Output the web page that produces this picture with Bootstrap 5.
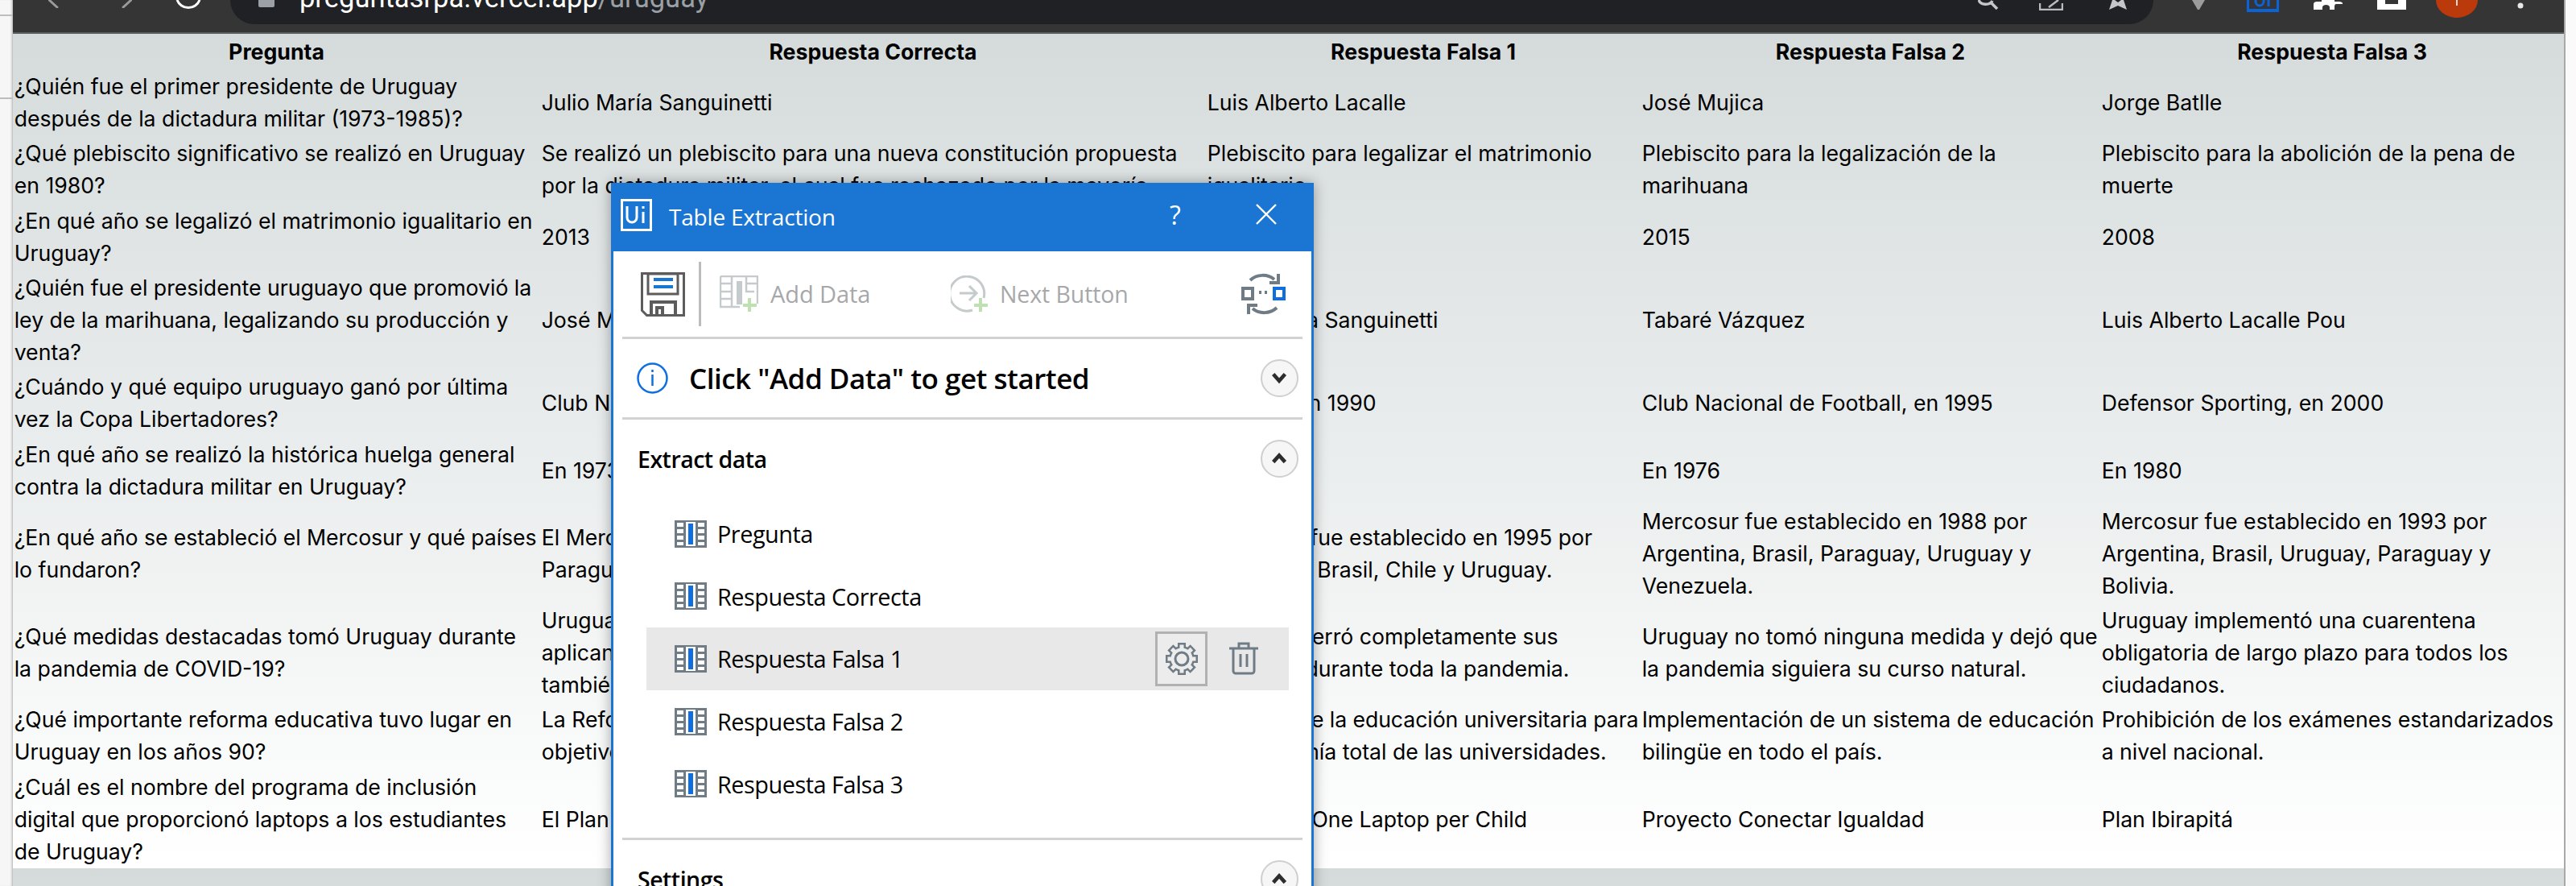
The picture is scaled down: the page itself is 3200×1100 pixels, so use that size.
<!DOCTYPE html>
<html lang="es">
<head>
  <meta charset="UTF-8">
  <title>preguntasrpa.vercel.app/uruguay</title>
  <link href="https://cdn.jsdelivr.net/npm/bootstrap@5.3.2/dist/css/bootstrap.min.css" rel="stylesheet">
  <style>
    html, body { height: 1100px; overflow: hidden; background: #fff; }
    svg { display: block; flex-shrink: 0; }

    /* ventana del navegador */
    .side-left { width: 16px; flex-shrink: 0; background: #f6f6f6; box-shadow: inset -3px 0 3px -2px #aaa; padding-top: 18px; }
    .side-left i { display: block; height: 2px; background: #bdbdbd; margin-bottom: 101px; }
    .side-right { width: 15px; flex-shrink: 0; background: #fafafa; border-left: 2px solid #a9a9a9; }
    .browser-win { width: 3169px; height: 1100px; flex-shrink: 0; position: relative; overflow: hidden; }

    .chrome-bar { height: 42px; background: #353535; border-bottom: 2px solid #5c5d5e; overflow: hidden; }
    .omnibox { height: 30px; width: 2389px; margin-left: 35px; background: #202124; border-radius: 0 0 30px 30px; overflow: hidden; flex-shrink: 0; }
    .omni-url { font: 34.5px/40px Roboto, sans-serif; color: #fff; margin: -23px 0 0 31px; white-space: nowrap; width: 2100px; flex-shrink: 0; }
    .omni-url span { color: #9aa0a6; }
    .ic-back { margin-left: 44px; }
    .ic-fwd { margin-left: 78px; }
    .ic-reload { margin-left: 53px; }
    .ic-lock { margin-left: 35px; }
    .ic-search { margin-left: -15px; }
    .ic-share { margin-left: 44px; }
    .ic-star { margin-left: 56px; }
    .ic-funnel { margin-left: 48px; }
    .ic-ui { margin-left: 52px; }
    .ic-puzzle { margin-left: 43px; }
    .ic-square { margin-left: 43px; }
    .ic-avatar { margin-left: 37px; }
    .ic-dot { margin-left: 49px; margin-top: 3px; }

    /* pagina */
    .page-bg { height: 1058px; background: linear-gradient(#d5dbdb, #fff) 0 0 / 100% 1036px repeat-y; }
    .quiz-table { --bs-table-bg: transparent; --bs-table-color: #000; width: 3169px; table-layout: fixed; margin: 0; font: 26.67px/40px Inter, sans-serif; color: #000; }
    .quiz-table > :not(caption) > * > * { padding: 1.67px; border: 0; box-shadow: none; vertical-align: middle; background: transparent; }
    .quiz-table th { font-weight: 700; text-align: center; }
    .tight-line { letter-spacing: -.08px; }
    .c-1 { width: 655px; }
    .c-2 { width: 827px; }
    .c-3 { width: 540px; }
    .c-4 { width: 571px; }
    .c-5 { width: 576px; }

    /* ventana flotante */
    .tx-popup { position: absolute; left: 743px; top: 227px; width: 873px; height: 900px; background: #fff; border: solid #1976d2; border-width: 0 3px; box-shadow: 0 0 16px rgba(0,0,0,.35); font-family: "Open Sans", sans-serif; color: #000; }
    .tx-title { height: 85px; margin: 0 -3px; background: #1b76d3; color: #fff; padding: 20px 0 0 12px; }
    .tx-title svg { margin-right: 21px; }
    .tx-title-text { font-size: 28px; line-height: 44px; width: 622px; letter-spacing: -.2px; }
    .tx-help { font-size: 32px; line-height: 40px; width: 105px; }
    .tx-tools { height: 106px; padding-left: 34px; }
    .tools-sep { width: 3px; height: 80px; background: #bcbcbc; margin: 0 23px 0 17px; }
    .tool-dim { color: #a6a8aa; font-size: 29px; line-height: 40px; letter-spacing: -.1px; }
    .tool-add { margin-left: 15px; width: 224px; }
    .tool-next { margin-left: 15px; width: 300px; font-size: 28.5px; }
    .tx-rule { height: 3px; background: #d2d2d2; margin: 0 11px; opacity: 1; border: 0; }
    .tx-status { height: 97px; padding: 0 16px 0 29px; }
    .tx-status-text { font-size: 35px; font-weight: 600; line-height: 44px; margin-left: 26px; letter-spacing: -.5px; }
    .round-btn { width: 47px; height: 47px; border: 2px solid #cfcfcf; border-radius: 50%; background: #f6f6f6; margin-left: auto; }
    .tx-section { height: 97px; padding: 0 16px 0 30px; }
    .tx-section-text { font-size: 28.5px; font-weight: 600; line-height: 40px; letter-spacing: -.5px; }
    .field-list { padding: 6px 28px 0 41px; height: 422px; }
    .field-row { height: 77.6px; padding-left: 35px; font-size: 28.8px; letter-spacing: -.45px; }
    .field-row svg { margin-right: 13px; }
    .field-on { background: #e8e8e8; padding-right: 38px; }
    .gear-box { width: 65px; height: 68px; border: 3px solid #b1b1b1; background: #ececec; margin-left: auto; }
    .gear-box svg { margin: 0; }
    .field-on .trash-ic { margin: 0 0 0 27px; }
  </style>
</head>
<body>

<svg width="0" height="0" class="position-absolute">
  <symbol id="col-ic" viewBox="0 0 40 34">
    <rect width="40" height="34" fill="#6f7c86"/>
    <g fill="#fff">
      <rect x="3" y="3" width="8" height="5"/><rect x="29" y="3" width="8" height="5"/>
      <rect x="3" y="11" width="8" height="5"/><rect x="29" y="11" width="8" height="5"/>
      <rect x="3" y="19" width="8" height="5"/><rect x="29" y="19" width="8" height="5"/>
      <rect x="3" y="27" width="8" height="4"/><rect x="29" y="27" width="8" height="4"/>
      <rect x="14" y="2" width="12" height="30"/>
    </g>
    <rect x="17" y="4" width="6" height="26" fill="#0f6fe0"/>
  </symbol>
  <symbol id="chev-down" viewBox="0 0 47 47">
    <path d="M15 18l8 9 8-9" fill="none" stroke="#2d2d2d" stroke-width="5"/>
  </symbol>
  <symbol id="chev-up" viewBox="0 0 47 47">
    <path d="M15 28l8-9 8 9" fill="none" stroke="#2d2d2d" stroke-width="5"/>
  </symbol>
</svg>

<div class="d-flex">
  <div class="side-left"><i></i><i></i></div>

  <div class="browser-win">
    <div class="chrome-bar d-flex align-items-start">
      <svg class="ic-back" width="13" height="10"><path d="M1 0l10 9" stroke="#9a9a9a" stroke-width="3" stroke-linecap="round"/></svg>
      <svg class="ic-fwd" width="13" height="10"><path d="M12 0L2 9" stroke="#9a9a9a" stroke-width="3" stroke-linecap="round"/></svg>
      <svg class="ic-reload" width="34" height="12"><path d="M3 0A15 15 0 0 0 31 0" fill="none" stroke="#fff" stroke-width="3"/></svg>
      <div class="omnibox d-flex align-items-start">
        <svg class="ic-lock" width="20" height="9"><rect y="-3" width="20" height="12" rx="2" fill="#9aa0a6"/></svg>
        <div class="omni-url">preguntasrpa.vercel.app<span>/uruguay</span></div>
        <svg class="ic-search" width="32" height="12"><path d="M1 0a9 7 0 0 0 17 1M15 2l9 9" fill="none" stroke="#c4c6c8" stroke-width="3.500"/></svg>
        <svg class="ic-share" width="30" height="13"><path d="M1 4v8h28V4M12 9L24 0" fill="none" stroke="#b9bbbd" stroke-width="2.500"/></svg>
        <svg class="ic-star" width="24" height="13"><path d="M5 0L1 12l11-5 11 5-4-12h-3l-4 3-4-3z" fill="#c4c6c8"/></svg>
      </div>
      <svg class="ic-funnel" width="16" height="12"><path d="M0 0h16L9 12H7z" fill="#9c9c9c"/></svg>
      <svg class="ic-ui" width="40" height="15"><path d="M0 0v15h40V0h-3v11H3V0z" fill="#0b63d8"/><path d="M11 0v2a5 5 0 0 0 10 0V0M27 0v8" fill="none" stroke="#0b63d8" stroke-width="3"/></svg>
      <svg class="ic-puzzle" width="36" height="12"><path d="M0 12V5c0-2 2-3 4-3h6V0h16v2h6c2 0 4 1 4 2v1h-8c-1 0-2 1-2 3v4h-6V9c0-4-9-4-9 0v3z" fill="#fff"/></svg>
      <svg class="ic-square" width="36" height="12"><path d="M0 0h10v5h16V0h10v12H0z" fill="#fff"/></svg>
      <svg class="ic-avatar" width="52" height="22"><path d="M0 0a26 22 0 0 0 52 0z" fill="#bb3a0c"/><rect x="25" width="2" height="7" fill="#f3d9cf"/></svg>
      <svg class="ic-dot" width="8" height="8"><circle cx="4" cy="4" r="3.500" fill="#e8e8e8"/></svg>
    </div>

    <div class="page-bg">
      <table class="table quiz-table">
        <colgroup>
          <col class="c-1"><col class="c-2"><col class="c-3"><col class="c-4"><col class="c-5">
        </colgroup>
        <thead>
          <tr><th>Pregunta</th><th>Respuesta Correcta</th><th>Respuesta Falsa 1</th><th>Respuesta Falsa 2</th><th>Respuesta Falsa 3</th></tr>
        </thead>
        <tbody>
          <tr>
            <td>¿Quién fue el primer presidente de Uruguay después de la dictadura militar (1973-1985)?</td>
            <td>Julio María Sanguinetti</td><td>Luis Alberto Lacalle</td><td>José Mujica</td><td>Jorge Batlle</td>
          </tr>
          <tr>
            <td>¿Qué plebiscito significativo se realizó en Uruguay en 1980?</td>
            <td>Se realizó un plebiscito para una nueva constitución propuesta por la dictadura militar, el cual fue rechazado por la mayoría.</td>
            <td>Plebiscito para legalizar el matrimonio igualitario</td>
            <td>Plebiscito para la legalización de la marihuana</td>
            <td>Plebiscito para la abolición de la pena de muerte</td>
          </tr>
          <tr>
            <td>¿En qué año se legalizó el matrimonio igualitario en Uruguay?</td>
            <td>2013</td><td>2010</td><td>2015</td><td>2008</td>
          </tr>
          <tr>
            <td>¿Quién fue el presidente uruguayo que promovió la ley de la marihuana, legalizando su producción y venta?</td>
            <td>José Mujica</td><td>Julio María Sanguinetti</td><td>Tabaré Vázquez</td><td>Luis Alberto Lacalle Pou</td>
          </tr>
          <tr>
            <td>¿Cuándo y qué equipo uruguayo ganó por última vez la Copa Libertadores?</td>
            <td>Club Nacional de Football, en 1988</td><td>Peñarol, en 1990</td><td>Club Nacional de Football, en 1995</td><td>Defensor Sporting, en 2000</td>
          </tr>
          <tr>
            <td>¿En qué año se realizó la histórica huelga general contra la dictadura militar en Uruguay?</td>
            <td>En 1973</td><td>En 1975</td><td>En 1976</td><td>En 1980</td>
          </tr>
          <tr>
            <td><span class="text-nowrap tight-line">¿En qué año se estableció el Mercosur y qué países</span> lo fundaron?</td>
            <td>El Mercosur se estableció en 1991 y lo fundaron Argentina, Brasil, Paraguay y Uruguay.</td>
            <td>Mercosur fue establecido en 1995 por Argentina, Brasil, Chile y Uruguay.</td>
            <td>Mercosur fue establecido en 1988 por Argentina, Brasil, Paraguay, Uruguay y Venezuela.</td>
            <td>Mercosur fue establecido en 1993 por Argentina, Brasil, Uruguay, Paraguay y Bolivia.</td>
          </tr>
          <tr>
            <td>¿Qué medidas destacadas tomó Uruguay durante la pandemia de COVID-19?</td>
            <td>Uruguay optó por una estrategia de libertad responsable,<br>aplicando pruebas masivas y rastreo de contactos, y<br>también promovió la vacunación temprana.</td>
            <td>Uruguay cerró completamente sus fronteras durante toda la pandemia.</td>
            <td>Uruguay no tomó ninguna medida y dejó que la pandemia siguiera su curso natural.</td>
            <td>Uruguay implementó una cuarentena obligatoria de largo plazo para todos los ciudadanos.</td>
          </tr>
          <tr>
            <td>¿Qué importante reforma educativa tuvo lugar en Uruguay en los años 90?</td>
            <td>La Reforma Rama, que modernizó la educación pública con el<br>objetivo de ampliar la cobertura y mejorar la calidad.</td>
            <td><span class="text-nowrap tight-line">Reforma de la educación universitaria para</span><br>la autonomía total de las universidades.</td>
            <td>Implementación de un sistema de educación bilingüe en todo el país.</td>
            <td>Prohibición de los exámenes estandarizados a nivel nacional.</td>
          </tr>
          <tr>
            <td>¿Cuál es el nombre del programa de inclusión digital que proporcionó laptops a los estudiantes<br>de Uruguay?</td>
            <td>El Plan Ceibal</td><td>Programa One Laptop per Child</td><td>Proyecto Conectar Igualdad</td><td>Plan Ibirapitá</td>
          </tr>
        </tbody>
      </table>
    </div>

    <div class="tx-popup">
      <div class="tx-title d-flex align-items-start">
        <svg width="39" height="40" viewBox="0 0 39 40">
          <rect x="1.500" y="1.500" width="36" height="37" fill="none" stroke="#fff" stroke-width="3"/>
          <path d="M8 9v14a6 6 0 0 0 12 0V9M28 16v14M28 9v3" fill="none" stroke="#fff" stroke-width="3"/>
        </svg>
        <div class="tx-title-text">Table Extraction</div>
        <div class="tx-help">?</div>
        <svg width="30" height="30" viewBox="0 0 30 30" class="mt-1"><path d="M3 3l24 24M27 3L3 27" stroke="#fff" stroke-width="2.400"/></svg>
      </div>

      <div class="tx-tools d-flex align-items-center">
        <svg width="55" height="55" viewBox="0 0 55 55">
          <path d="M1.500 1.500h52v52h-46l-6-6z" fill="#fff" stroke="#5c5c5c" stroke-width="3"/>
          <rect x="9" y="2" width="37" height="25" fill="#fff" stroke="#5c5c5c" stroke-width="3"/>
          <path d="M16 9h24M16 18h24" stroke="#1976d2" stroke-width="4"/>
          <path d="M13 53V37h30v16M20 53V44h7v9" fill="none" stroke="#5c5c5c" stroke-width="4"/>
        </svg>
        <div class="tools-sep"></div>
        <svg width="48" height="46" viewBox="0 0 48 46">
          <path d="M1 1h46v34M1 1v38h24M1 10h14M1 20h14M1 29h14M15 1v38M33 1v20M33 10h14M33 20h10" fill="none" stroke="#c5cacd" stroke-width="2.500"/>
          <rect x="21" y="7" width="7" height="29" fill="#c5cacd"/>
          <path d="M37 28v17M29 37h17" stroke="#bfe0b0" stroke-width="4"/>
        </svg>
        <div class="tool-dim tool-add">Add Data</div>
        <svg width="46" height="46" viewBox="0 0 46 46">
          <path d="M41 28A21.500 21.500 0 1 0 27 43" fill="none" stroke="#c5cacd" stroke-width="3"/>
          <path d="M11 22h20M23 13l9 9-9 9" fill="none" stroke="#c5cacd" stroke-width="3"/>
          <path d="M37 28v17M29 37h17" stroke="#bfe0b0" stroke-width="4"/>
        </svg>
        <div class="tool-dim tool-next">Next Button</div>
        <svg width="55" height="52" viewBox="0 0 55 52">
          <path d="M11 9c8-8 22-8 30-1" fill="none" stroke="#6f7c86" stroke-width="4"/>
          <path d="M46 1v11H35" fill="none" stroke="#6f7c86" stroke-width="4"/>
          <path d="M44 43c-8 8-22 8-30 1" fill="none" stroke="#6f7c86" stroke-width="4"/>
          <path d="M9 51V40h11" fill="none" stroke="#6f7c86" stroke-width="4"/>
          <rect x="2" y="19" width="12" height="13" fill="none" stroke="#6f7c86" stroke-width="4"/>
          <rect x="41" y="19" width="12" height="13" fill="none" stroke="#0f6fe0" stroke-width="4"/>
          <path d="M22 24h3M29 24h3" stroke="#6f7c86" stroke-width="4"/>
        </svg>
      </div>
      <hr class="tx-rule my-0">

      <div class="tx-status d-flex align-items-center">
        <svg width="39" height="39" viewBox="0 0 39 39">
          <circle cx="19.500" cy="19.500" r="18" fill="none" stroke="#0f6fe0" stroke-width="2.500"/>
          <path d="M19.500 15v14M19.500 9v3" stroke="#0f6fe0" stroke-width="2.500"/>
        </svg>
        <div class="tx-status-text">Click "Add Data" to get started</div>
        <div class="round-btn"><svg width="43" height="43"><use href="#chev-down"/></svg></div>
      </div>
      <hr class="tx-rule my-0">

      <div class="tx-section d-flex align-items-center">
        <div class="tx-section-text">Extract data</div>
        <div class="round-btn"><svg width="43" height="43"><use href="#chev-up"/></svg></div>
      </div>

      <div class="field-list">
        <div class="field-row d-flex align-items-center"><svg width="40" height="34"><use href="#col-ic"/></svg>Pregunta</div>
        <div class="field-row d-flex align-items-center"><svg width="40" height="34"><use href="#col-ic"/></svg>Respuesta Correcta</div>
        <div class="field-row field-on d-flex align-items-center">
          <svg width="40" height="34"><use href="#col-ic"/></svg>Respuesta Falsa 1
          <div class="gear-box d-flex align-items-center justify-content-center">
            <svg width="42" height="42" viewBox="0 0 42 42">
              <g fill="#6f7c86">
                <circle cx="21" cy="21" r="16"/>
                <rect x="16" y="1" width="10" height="40"/>
                <rect x="16" y="1" width="10" height="40" transform="rotate(45 21 21)"/>
                <rect x="16" y="1" width="10" height="40" transform="rotate(90 21 21)"/>
                <rect x="16" y="1" width="10" height="40" transform="rotate(135 21 21)"/>
              </g>
              <g fill="#ececec">
                <circle cx="21" cy="21" r="13.500"/>
                <rect x="18.500" y="3.500" width="5" height="35"/>
                <rect x="18.500" y="3.500" width="5" height="35" transform="rotate(45 21 21)"/>
                <rect x="18.500" y="3.500" width="5" height="35" transform="rotate(90 21 21)"/>
                <rect x="18.500" y="3.500" width="5" height="35" transform="rotate(135 21 21)"/>
              </g>
              <circle cx="21" cy="21" r="8" fill="none" stroke="#6f7c86" stroke-width="3"/>
            </svg>
          </div>
          <svg class="trash-ic" width="36" height="41" viewBox="0 0 36 41">
            <path d="M0 8h36M12 8V2h12v6M5 8v28a3 3 0 0 0 3 3h20a3 3 0 0 0 3-3V8M14 15v16M22 15v16" fill="none" stroke="#6f7c86" stroke-width="3"/>
          </svg>
        </div>
        <div class="field-row d-flex align-items-center"><svg width="40" height="34"><use href="#col-ic"/></svg>Respuesta Falsa 2</div>
        <div class="field-row d-flex align-items-center"><svg width="40" height="34"><use href="#col-ic"/></svg>Respuesta Falsa 3</div>
      </div>
      <hr class="tx-rule my-0">

      <div class="tx-section d-flex align-items-center">
        <div class="tx-section-text">Settings</div>
        <div class="round-btn"><svg width="43" height="43"><use href="#chev-up"/></svg></div>
      </div>
    </div>
  </div>

  <div class="side-right"></div>
</div>

<script src="https://cdn.jsdelivr.net/npm/bootstrap@5.3.2/dist/js/bootstrap.bundle.min.js"></script>
</body>
</html>
